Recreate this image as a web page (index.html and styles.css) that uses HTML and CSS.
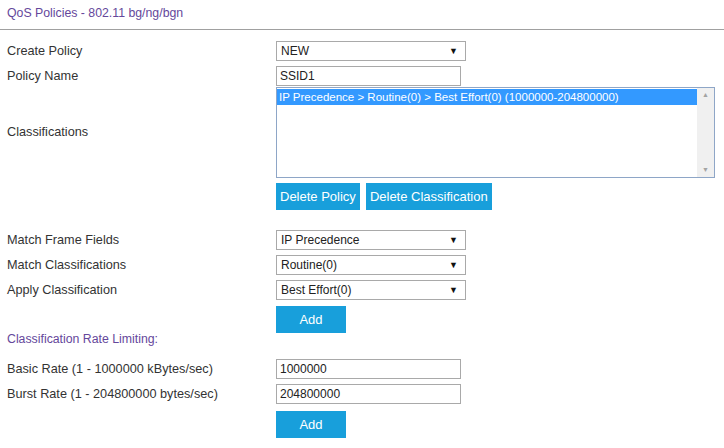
FILE: index.html
```html
<!DOCTYPE html>
<html lang="en">
<head>
    <meta charset="UTF-8">
    <meta name="viewport" content="width=device-width, initial-scale=1.0">
    <title>QoS Policies</title>
    <link rel="stylesheet" href="styles.css">
</head>
<body>
    <div class="title">QoS Policies - 802.11 bg/ng/bgn</div>

    <div class="form">
        <!-- Policy -->
        <div class="row">
            <label>Create Policy</label>
            <span class="select-wrap"><select><option>NEW</option></select></span>
        </div>
        <div class="row row-tight">
            <label>Policy Name</label>
            <input type="text" value="SSID1">
        </div>
        <div class="row">
            <label>Classifications</label>
            <div class="listbox">
                <div class="list-items">
                    <div class="list-item selected">IP Precedence &gt; Routine(0) &gt; Best Effort(0) (1000000-204800000)</div>
                </div>
                <div class="scrollbar">
                    <span>&#9650;</span>
                    <span>&#9660;</span>
                </div>
            </div>
        </div>
        <div class="row buttons row-gap">
            <button class="btn">Delete Policy</button>
            <button class="btn">Delete Classification</button>
        </div>

        <!-- Classification -->
        <div class="row">
            <label>Match Frame Fields</label>
            <span class="select-wrap"><select><option>IP Precedence</option></select></span>
        </div>
        <div class="row">
            <label>Match Classifications</label>
            <span class="select-wrap"><select><option>Routine(0)</option></select></span>
        </div>
        <div class="row">
            <label>Apply Classification</label>
            <span class="select-wrap"><select><option>Best Effort(0)</option></select></span>
        </div>
        <div class="row buttons add-first">
            <button class="btn btn-add">Add</button>
        </div>

        <!-- Rate Limiting -->
        <div class="section">Classification Rate Limiting:</div>
        <div class="row">
            <label>Basic Rate (1 - 1000000 kBytes/sec)</label>
            <input type="text" value="1000000">
        </div>
        <div class="row">
            <label>Burst Rate (1 - 204800000 bytes/sec)</label>
            <input type="text" value="204800000">
        </div>
        <div class="row buttons add-last">
            <button class="btn btn-add">Add</button>
        </div>
    </div>
</body>
</html>
```

FILE: styles.css
```css
* {
    margin: 0;
    padding: 0;
    box-sizing: border-box;
    font-family: Arial, "Liberation Sans", sans-serif;
}

body {
    background-color: #fff;
    color: #333;
    font-size: 13px;
}

.title {
    height: 30px;
    padding: 6px 7px 0;
    font-size: 12.3px;
    line-height: 14px;
    color: #65479b;
    border-bottom: 1px solid #a0a0a0;
}

.form {
    padding: 11px 0 0 7px;
}

.row {
    display: flex;
    align-items: center;
    margin-bottom: 5px;
}

.row-tight {
    margin-bottom: 1px;
}

.row label {
    width: 269px;
    flex: none;
    line-height: 15px;
    font-size: 12.7px;
}

.select-wrap {
    position: relative;
    display: inline-block;
}

.select-wrap::after {
    content: "\25BC";
    position: absolute;
    right: 8px;
    top: 5px;
    font-size: 9px;
    color: #111;
    pointer-events: none;
}

select {
    appearance: none;
    -webkit-appearance: none;
    width: 190px;
    height: 20px;
    border: 1px solid #a9a9a9;
    background-color: #fff;
    color: #222;
    font-size: 12px;
    padding: 0 4px;
}

input[type="text"] {
    width: 185px;
    height: 20px;
    border: 1px solid #a9a9a9;
    color: #222;
    font-size: 12px;
    padding: 0 3px;
}

.listbox {
    display: flex;
    width: 439px;
    height: 91px;
    border: 1px solid #8ea6c7;
    background-color: #fff;
}

.list-items {
    flex: 1;
    padding-top: 1px;
}

.list-item {
    height: 16px;
    line-height: 16px;
    font-size: 11.5px;
    padding-left: 2px;
}

.list-item.selected {
    background-color: #3399ff;
    color: #fff;
}

.scrollbar {
    width: 17px;
    display: flex;
    flex-direction: column;
    justify-content: space-between;
    align-items: center;
    background-color: #f0f0f0;
    padding: 3px 0 4px;
    color: #a3a3a3;
    font-size: 7px;
}

.buttons {
    padding-left: 269px;
    gap: 6px;
}

.row-gap {
    margin-top: 5px;
    margin-bottom: 20px;
}

.add-first {
    margin-top: 6px;
    margin-bottom: 0;
}

.add-last {
    margin-top: 7px;
}

.btn {
    height: 27px;
    padding: 0 4px;
    background-color: #189fdb;
    color: #fff;
    border: none;
    font-size: 13px;
    cursor: pointer;
}

.btn-add {
    width: 70px;
}

.section {
    color: #65479b;
    font-size: 12.3px;
    line-height: 13px;
    margin-bottom: 13px;
}
```
